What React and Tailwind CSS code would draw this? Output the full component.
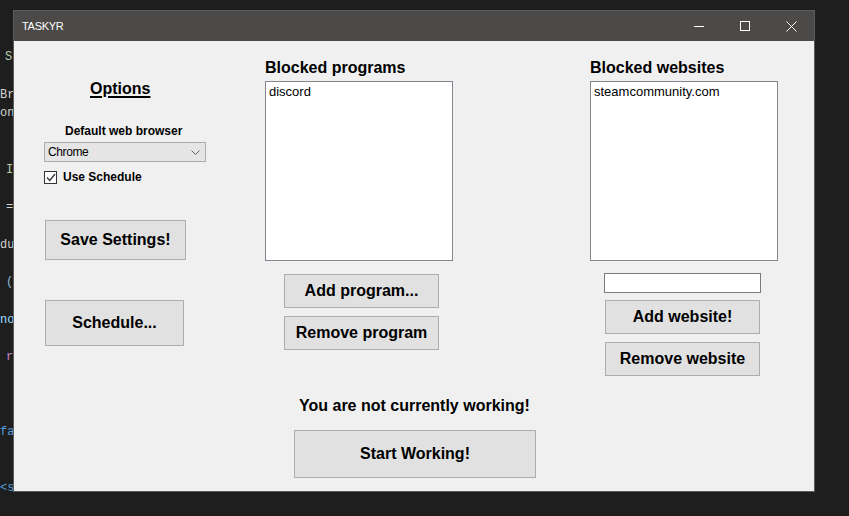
import React from 'react';

// code fragments peeking out from the editor behind the window
const codeLines = [
  { y: 0, text: 'S', pl: 'pl-[5px]', color: 'text-[#b5cea8]' },
  { y: 2, text: 'Br', pl: 'pl-0', color: 'text-[#d4d4d4]' },
  { y: 3, text: 'on', pl: 'pl-0', color: 'text-[#d4d4d4]' },
  { y: 6, text: 'I', pl: 'pl-[6px]', color: 'text-[#b5cea8]' },
  { y: 8, text: '=', pl: 'pl-[6px]', color: 'text-[#d4d4d4]' },
  { y: 10, text: 'du', pl: 'pl-0', color: 'text-[#d4d4d4]' },
  { y: 12, text: '(', pl: 'pl-[6px]', color: 'text-[#8fb8dc]' },
  { y: 14, text: 'no', pl: 'pl-0', color: 'text-[#9cdcfe]' },
  { y: 16, text: 'r', pl: 'pl-[6px]', color: 'text-[#c586c0]' },
  { y: 20, text: 'fa', pl: 'pl-0', color: 'text-[#569cd6]' },
  { y: 23, text: '<s', pl: 'pl-0', color: 'text-[#569cd6]' },
];

const CodeStrip = () => {
  const rows = [];
  for (let i = 0; i < 24; i++) {
    const line = codeLines.find(l => l.y === i);
    rows.push(
      <div key={i} className={`h-[18.75px] leading-[18.75px] whitespace-nowrap ${line ? line.pl + ' ' + line.color : ''}`}>
        {line ? line.text : '\u00a0'}
      </div>
    );
  }
  return (
    <div className="w-[13px] h-full overflow-hidden shrink-0 pt-[48px] font-['Liberation_Mono',monospace] text-[12px]">
      {rows}
    </div>
  );
};

// plain WinForms style button
const Btn = ({ className, children }) => (
  <div className={`bg-[#e1e1e1] border border-[#adadad] flex items-center justify-center text-[16px] font-bold text-black ${className}`}>
    {children}
  </div>
);

const ListBox = ({ items }) => (
  <div className="w-[188px] h-[180px] bg-white border border-[#828790] pl-[3px] pt-[2px] text-[13px] leading-[15px] text-black">
    {items.map(item => (
      <div key={item}>{item}</div>
    ))}
  </div>
);

export default function App() {
  return (
    <div className="w-[849px] h-[516px] bg-[#1e1e1e] flex items-start overflow-hidden font-['Liberation_Sans',Arial,sans-serif]">
      <CodeStrip />

      {/* the app window */}
      <div className="mt-[10px] w-[802px] h-[482px] shrink-0 border border-[#5c5c5c] flex flex-col bg-[#f0f0f0]">
        {/* title bar */}
        <div className="h-[30px] bg-[#4b4a48] flex items-center">
          <span className="pl-[8px] text-[11px] tracking-[-0.3px] text-white">TASKYR</span>
          <div className="ml-auto flex h-full">
            <div className="w-[46px] h-full flex items-center justify-center">
              <div className="w-[10px] h-px bg-white" />
            </div>
            <div className="w-[46px] h-full flex items-center justify-center">
              <div className="w-[10px] h-[10px] border border-white" />
            </div>
            <div className="w-[46px] h-full flex items-center justify-center">
              <svg width="11" height="11" viewBox="0 0 11 11">
                <path d="M0.5 0.5 L10.5 10.5 M10.5 0.5 L0.5 10.5" stroke="#ffffff" strokeWidth="1" />
              </svg>
            </div>
          </div>
        </div>

        {/* client area */}
        <div className="flex-1 flex flex-col text-black">
          <div className="flex items-start">
            {/* options column */}
            <div className="ml-[30px] w-[162px] flex flex-col">
              <div className="mt-[38px] h-[20px] leading-[20px] pl-[46px] text-[16px] font-bold underline decoration-2 underline-offset-[2px]">
                Options
              </div>
              <div className="mt-[24px] h-[16px] leading-[16px] pl-[21px] text-[12px] font-bold">
                Default web browser
              </div>
              <div className="mt-[3px] h-[20px] w-[162px] bg-[#e5e5e5] border border-[#acacac] flex items-center pl-[3px] pr-[5px]">
                <span className="text-[12px] font-['Liberation_Sans_Narrow','Liberation_Sans',sans-serif] tracking-[-0.4px]">Chrome</span>
                <svg className="ml-auto" width="9" height="5" viewBox="0 0 9 5">
                  <path d="M0.5 0.5 L4.5 4.5 L8.5 0.5" stroke="#606060" strokeWidth="1" fill="none" />
                </svg>
              </div>
              <div className="mt-[8px] h-[14px] flex items-center">
                <div className="w-[13px] h-[13px] border border-[#333333] bg-white flex items-center justify-center">
                  <svg width="10" height="9" viewBox="0 0 10 9">
                    <path d="M1 4.5 L3.8 7.5 L9 1" stroke="#333333" strokeWidth="1.3" fill="none" />
                  </svg>
                </div>
                <span className="ml-[6px] text-[12px] font-bold">Use Schedule</span>
              </div>
              <Btn className="mt-[36px] ml-[1px] w-[141px] h-[40px]">Save Settings!</Btn>
              <Btn className="mt-[40px] ml-[1px] w-[139px] h-[46px]">Schedule...</Btn>
            </div>

            {/* blocked programs */}
            <div className="ml-[59px] w-[188px] flex flex-col">
              <div className="mt-[17px] h-[20px] leading-[20px] text-[16px] font-bold">Blocked programs</div>
              <div className="mt-[3px]">
                <ListBox items={['discord']} />
              </div>
              <Btn className="mt-[13px] ml-[19px] w-[155px] h-[34px]">Add program...</Btn>
              <Btn className="mt-[8px] ml-[19px] w-[155px] h-[34px]">Remove program</Btn>
            </div>

            {/* blocked websites */}
            <div className="ml-[137px] w-[188px] flex flex-col">
              <div className="mt-[17px] h-[20px] leading-[20px] text-[16px] font-bold">Blocked websites</div>
              <div className="mt-[3px]">
                <ListBox items={['steamcommunity.com']} />
              </div>
              <div className="mt-[12px] ml-[14px] w-[157px] h-[20px] bg-white border border-[#7a7a7a]" />
              <Btn className="mt-[7px] ml-[15px] w-[155px] h-[34px]">Add website!</Btn>
              <Btn className="mt-[8px] ml-[15px] w-[155px] h-[34px]">Remove website</Btn>
            </div>
          </div>

          {/* status + start */}
          <div className="mt-[20px] ml-[285px] h-[20px] leading-[20px] text-[16px] font-bold whitespace-nowrap">
            You are not currently working!
          </div>
          <Btn className="mt-[14px] ml-[280px] w-[242px] h-[48px]">Start Working!</Btn>
        </div>
      </div>
    </div>
  );
}
